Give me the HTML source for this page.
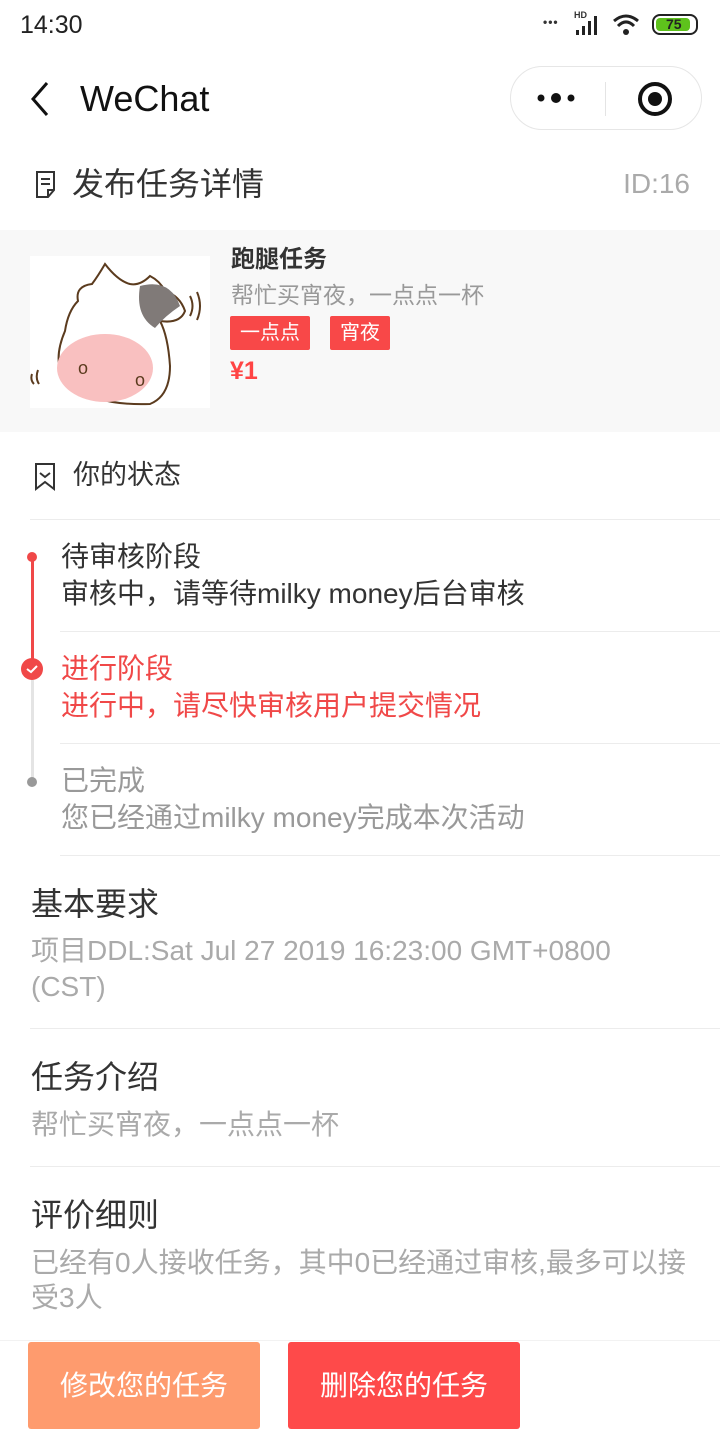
<!DOCTYPE html>
<html><head><meta charset="utf-8"><style>
*{margin:0;padding:0;box-sizing:border-box}
body{width:720px;height:1440px;background:#fff;position:relative;overflow:hidden;font-family:"Liberation Sans","Noto Sans CJK SC",sans-serif;color:#333}
.a{position:absolute;white-space:nowrap;line-height:1}
.hr{position:absolute;height:1px;background:#ececec}
</style></head><body>
<div class="a" style="left:20px;top:13px;font-size:25px;color:#222">14:30</div>
<div class="a" style="left:543px;top:16px;font-size:12px;font-weight:bold;letter-spacing:1px">•••</div>
<div class="a" style="left:574px;top:11px;font-size:9px;font-weight:bold">HD</div>
<svg class="a" style="left:576px;top:14px" width="28" height="22"><rect x="0" y="16" width="3" height="5" fill="#222"/><rect x="6" y="12" width="3" height="9" fill="#222"/><rect x="12" y="7" width="3" height="14" fill="#222"/><rect x="18" y="2" width="3" height="19" fill="#222"/></svg>
<svg class="a" style="left:612px;top:13px" width="30" height="24"><path d="M2 8 Q14 -2 26 8" stroke="#222" stroke-width="3" fill="none"/><path d="M6 13 Q14 5 22 13" stroke="#222" stroke-width="3" fill="none"/><circle cx="14" cy="19" r="3" fill="#222"/></svg>
<div class="a" style="left:652px;top:14px;width:46px;height:21px;border:2px solid #222;border-radius:8px"><div style="position:absolute;left:2px;top:2px;width:34px;height:13px;background:#5ec21c;border-radius:4px"></div><div style="position:absolute;left:12px;top:1px;font-size:14px;font-weight:bold;color:#222">75</div></div>
<svg class="a" style="left:28px;top:80px" width="24" height="40"><path d="M19 3 L5 19 L19 35" stroke="#111" stroke-width="3" fill="none"/></svg>
<div class="a" style="left:80px;top:81px;font-size:36px;color:#111">WeChat</div>
<div class="a" style="left:510px;top:66px;width:192px;height:64px;border:1px solid #e6e6e6;border-radius:32px"></div>
<div class="a" style="left:605px;top:82px;width:1px;height:34px;background:#e4e4e4"></div>
<svg class="a" style="left:536px;top:88px" width="44" height="20"><circle cx="5" cy="10" r="3.5" fill="#111"/><circle cx="20" cy="10" r="5" fill="#111"/><circle cx="35" cy="10" r="3.5" fill="#111"/></svg>
<svg class="a" style="left:636px;top:80px" width="38" height="38"><circle cx="19" cy="19" r="15" stroke="#111" stroke-width="4" fill="none"/><circle cx="19" cy="19" r="7" fill="#111"/></svg>
<svg class="a" style="left:34px;top:170px" width="26" height="30"><path d="M3 2 H20 V20 L14 27 H3 Z M14 27 V20 H20" stroke="#333" stroke-width="2" fill="none"/><path d="M7 9 H16 M7 14 H16" stroke="#333" stroke-width="2"/></svg>
<div class="a" style="left:72px;top:168px;font-size:32px;color:#333">发布任务详情</div>
<div class="a" style="right:30px;top:170px;font-size:28px;color:#aaa">ID:16</div>
<div class="a" style="left:0;top:230px;width:720px;height:202px;background:#f8f8f8"></div>
<div class="a" style="left:30px;top:256px;width:180px;height:152px;background:#fff;overflow:hidden">
<svg width="180" height="152"><path d="M75 8 Q68 20 62 28 Q45 30 48 45 Q38 55 35 75 Q20 110 40 130 Q70 150 120 148 Q140 140 140 110 Q138 80 130 65 Q150 68 155 55 Q150 40 135 35 Q130 25 120 20 Q110 30 100 28 Q88 25 75 8Z" fill="#fff" stroke="#5b3b1e" stroke-width="2"/><path d="M110 30 Q140 22 150 50 Q135 60 125 72 Q105 60 110 30Z" fill="#807a78"/><ellipse cx="75" cy="112" rx="48" ry="34" fill="#f9c0c0"/><text x="48" y="118" font-size="18" fill="#5b3b1e">o</text><text x="105" y="130" font-size="18" fill="#5b3b1e">o</text><path d="M2 118 Q0 124 4 128 M8 114 Q5 122 9 128 M160 40 Q165 50 160 60 M167 36 Q173 50 167 64" stroke="#5b3b1e" stroke-width="2" fill="none"/></svg></div>
<div class="a" style="left:231px;top:248px;font-size:24px;font-weight:bold;color:#333">跑腿任务</div>
<div class="a" style="left:231px;top:284px;font-size:23px;color:#999">帮忙买宵夜，一点点一杯</div>
<div class="a" style="left:230px;top:316px;width:80px;height:34px;background:#f84848;border-radius:2px;color:#fff;font-size:20px;text-align:center;line-height:34px">一点点</div>
<div class="a" style="left:330px;top:316px;width:60px;height:34px;background:#f84848;border-radius:2px;color:#fff;font-size:20px;text-align:center;line-height:34px">宵夜</div>
<div class="a" style="left:230px;top:359px;font-size:25px;font-weight:bold;color:#f44">¥1</div>
<svg class="a" style="left:34px;top:462px" width="24" height="30"><path d="M2 2 H20 V27 L11 20 L2 27 Z" stroke="#333" stroke-width="2" fill="none"/><path d="M6 11 L11 15 L16 11" stroke="#333" stroke-width="2" fill="none"/></svg>
<div class="a" style="left:73px;top:462px;font-size:27px;color:#333">你的状态</div>
<div class="hr" style="left:30px;right:0;top:519px"></div>
<div class="a" style="left:31px;top:557px;width:3px;height:112px;background:#f04848"></div>
<div class="a" style="left:31px;top:680px;width:3px;height:102px;background:#e4e4e4"></div>
<div class="a" style="left:27px;top:552px;width:10px;height:10px;border-radius:50%;background:#f04848"></div>
<div class="a" style="left:27px;top:777px;width:10px;height:10px;border-radius:50%;background:#999"></div>
<svg class="a" style="left:20px;top:657px" width="24" height="24"><circle cx="12" cy="12" r="11" fill="#f04848"/><path d="M7 12 L11 15 L17 9" stroke="#fff" stroke-width="2" fill="none"/></svg>
<div class="a" style="left:61px;top:543px;font-size:28px;color:#333">待审核阶段</div>
<div class="a" style="left:61px;top:580px;font-size:28px;color:#333">审核中，请等待milky money后台审核</div>
<div class="hr" style="left:60px;right:0;top:631px"></div>
<div class="a" style="left:61px;top:655px;font-size:28px;color:#f04848">进行阶段</div>
<div class="a" style="left:61px;top:692px;font-size:28px;color:#f04848">进行中，请尽快审核用户提交情况</div>
<div class="hr" style="left:60px;right:0;top:743px"></div>
<div class="a" style="left:61px;top:767px;font-size:28px;color:#999">已完成</div>
<div class="a" style="left:61px;top:804px;font-size:28px;color:#999">您已经通过milky money完成本次活动</div>
<div class="hr" style="left:60px;right:0;top:855px"></div>
<div class="a" style="left:31px;top:888px;font-size:32px;color:#333">基本要求</div>
<div class="a" style="left:31px;top:937px;font-size:28px;color:#aaa">项目DDL:Sat Jul 27 2019 16:23:00 GMT+0800</div>
<div class="a" style="left:31px;top:973px;font-size:28px;color:#aaa">(CST)</div>
<div class="hr" style="left:30px;right:0;top:1028px"></div>
<div class="a" style="left:31px;top:1061px;font-size:32px;color:#333">任务介绍</div>
<div class="a" style="left:31px;top:1111px;font-size:28px;color:#aaa">帮忙买宵夜，一点点一杯</div>
<div class="hr" style="left:30px;right:0;top:1166px"></div>
<div class="a" style="left:31px;top:1199px;font-size:32px;color:#333">评价细则</div>
<div class="a" style="left:31px;top:1249px;font-size:28px;color:#aaa">已经有0人接收任务，其中0已经通过审核,最多可以接</div>
<div class="a" style="left:31px;top:1284px;font-size:28px;color:#aaa">受3人</div>
<div class="hr" style="left:0;right:0;top:1340px;background:#f2f2f2"></div>
<div class="a" style="left:28px;top:1342px;width:232px;height:87px;background:#fe9b6e;border-radius:3px;color:#fff;font-size:28px;text-align:center;line-height:87px">修改您的任务</div>
<div class="a" style="left:288px;top:1342px;width:232px;height:87px;background:#fe4a4a;border-radius:3px;color:#fff;font-size:28px;text-align:center;line-height:87px">删除您的任务</div>
</body></html>
